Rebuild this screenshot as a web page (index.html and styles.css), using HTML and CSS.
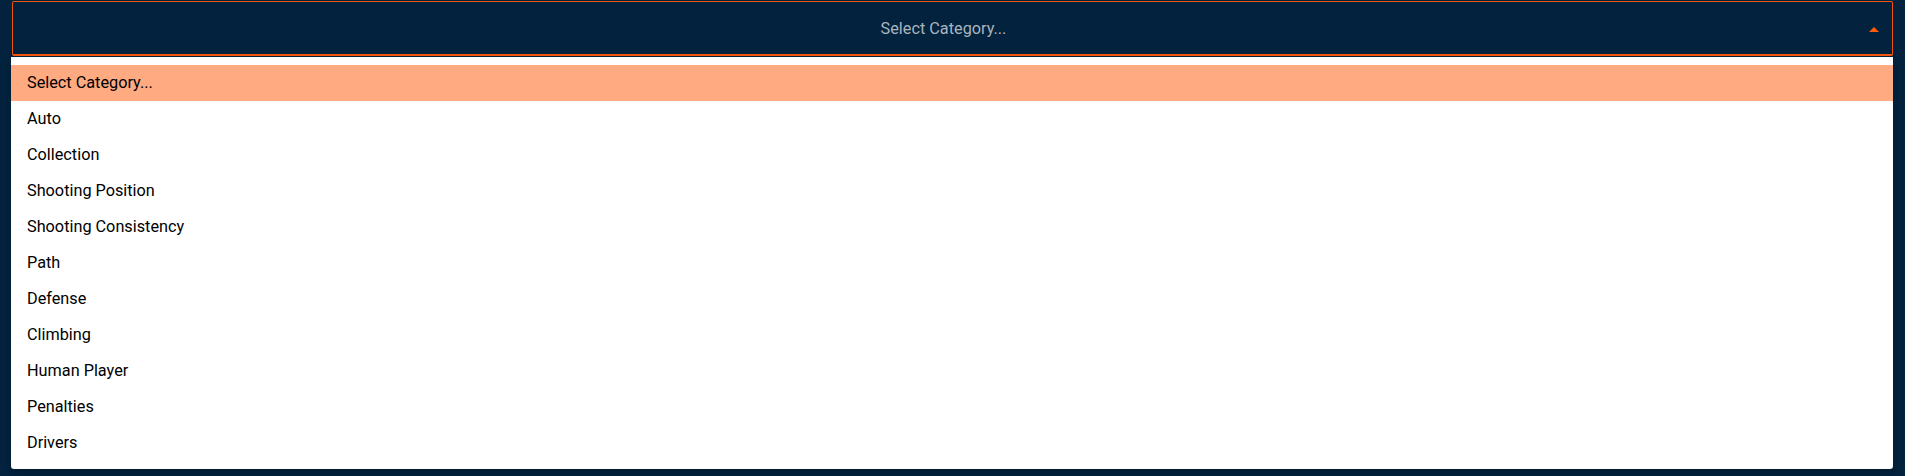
FILE: index.html
```html
<!DOCTYPE html>
<html>
<head>
<meta charset="utf-8">
<link rel="stylesheet" href="styles.css">
</head>
<body>
<div class="page">
  <div class="select">
    <div class="control">
      <span class="placeholder">Select Category...</span>
      <svg class="arrow" width="10" height="5" viewBox="0 0 10 5"><path d="M0 5 L5 0 L10 5 Z" fill="#ff5a0a"/></svg>
    </div>
    <ul class="menu">
      <li class="option active">Select Category...</li>
      <li class="option">Auto</li>
      <li class="option">Collection</li>
      <li class="option">Shooting Position</li>
      <li class="option">Shooting Consistency</li>
      <li class="option">Path</li>
      <li class="option">Defense</li>
      <li class="option">Climbing</li>
      <li class="option">Human Player</li>
      <li class="option">Penalties</li>
      <li class="option">Drivers</li>
    </ul>
  </div>
</div>
</body>
</html>
```

FILE: styles.css
```css
html, body {
  margin: 0;
  padding: 0;
  background: #02223d;
  height: 100%;
}
body {
  font-family: Roboto, "Noto Sans", Arial, sans-serif;
  font-size: 16px;
}
.page {
  padding: 1px 12px 0 11px;
}
.select {
  position: relative;
}
.control {
  margin-left: 1px;
  height: 52px;
  border: 1px solid #f2560c;
  border-bottom-width: 2px;
  border-radius: 2px;
  background: #02223d;
  display: flex;
  align-items: center;
  justify-content: center;
  position: relative;
  padding-right: 18px;
}
.placeholder {
  color: #a9b4bf;
  font-size: 16.25px;
}
.arrow {
  position: absolute;
  right: 13px;
  top: 25px;
}
.menu {
  position: absolute;
  left: 0;
  right: 0;
  top: 56px;
  margin: 0;
  padding: 8px 0;
  list-style: none;
  background: #ffffff;
  border-radius: 0 0 3px 3px;
  box-shadow: 0 4px 6px rgba(0, 0, 0, 0.2);
}
.option {
  height: 36px;
  line-height: 36px;
  padding-left: 16px;
  color: #000000;
  font-size: 16.25px;
}
.option.active {
  background: #ffaa80;
}
```
